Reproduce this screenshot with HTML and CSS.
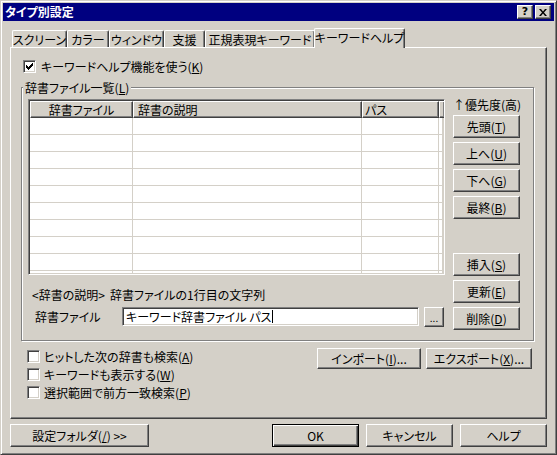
FILE: index.html
```html
<!DOCTYPE html>
<html lang="ja">
<head>
<meta charset="utf-8">
<title>タイプ別設定</title>
<link rel="stylesheet" href="styles.css">
</head>
<body>
<div class="window">
  <div class="titlebar">
    <span class="title">タイプ別設定</span>
    <div class="capbtns">
      <span class="capbtn q">?</span>
      <span class="capbtn"><svg class="xicon" width="8" height="7" viewBox="0 0 8 7"><path d="M0 0h2l2 2.5L6 0h2L5 3.5 8 7H6L4 4.5 2 7H0l3-3.5z" fill="#000"/></svg></span>
    </div>
  </div>
  <div class="client">
    <div class="tabs">
      <div class="tab t1">スクリーン</div>
      <div class="tab t2">カラー</div>
      <div class="tab t3">ウィンドウ</div>
      <div class="tab t4">支援</div>
      <div class="tab t5">正規表現キーワード</div>
      <div class="tab t6 sel">キーワードヘルプ</div>
    </div>
    <div class="panel">
      <div class="chkrow top">
        <span class="chk"><svg width="9" height="9" viewBox="0 0 9 9" shape-rendering="crispEdges"><path d="M1 3V6H2V7H3V8H4V7H5V6H6V5H7V4H8V1H7V2H6V3H5V4H4V5H3V4H2V3Z" fill="#000"/></svg></span>
        <span>キーワードヘルプ機能を使う(<u>K</u>)</span>
      </div>
      <fieldset class="group">
        <legend>辞書ファイル一覧(<u>L</u>)</legend>
        <div class="group-body">
          <div class="leftcol">
            <div class="listview">
              <div class="lv-header">
                <div class="hcell center">辞書ファイル</div>
                <div class="hcell">辞書の説明</div>
                <div class="hcell narrow">パス</div>
                <div class="hcell"></div>
              </div>
              <div class="lv-row"><span></span><span></span><span></span><span></span></div>
              <div class="lv-row"><span></span><span></span><span></span><span></span></div>
              <div class="lv-row"><span></span><span></span><span></span><span></span></div>
              <div class="lv-row"><span></span><span></span><span></span><span></span></div>
              <div class="lv-row"><span></span><span></span><span></span><span></span></div>
              <div class="lv-row"><span></span><span></span><span></span><span></span></div>
              <div class="lv-row"><span></span><span></span><span></span><span></span></div>
              <div class="lv-row"><span></span><span></span><span></span><span></span></div>
              <div class="lv-row"><span></span><span></span><span></span><span></span></div>
              <div class="lv-row"><span></span><span></span><span></span><span></span></div>
            </div>
            <div class="descrow">
              <span class="dlabel">&lt;辞書の説明&gt;</span>
              <span>辞書ファイルの1行目の文字列</span>
            </div>
            <div class="filerow">
              <span class="flabel">辞書ファイル</span>
              <div class="input">キーワード辞書ファイル パス<span class="caret"></span></div>
              <div class="btn dots">...</div>
            </div>
          </div>
          <div class="rightcol">
            <div class="prio">↑優先度(高)</div>
            <div class="btn">先頭(<u>T</u>)</div>
            <div class="btn">上へ(<u>U</u>)</div>
            <div class="btn">下へ(<u>G</u>)</div>
            <div class="btn">最終(<u>B</u>)</div>
            <div class="btn far">挿入(<u>S</u>)</div>
            <div class="btn">更新(<u>E</u>)</div>
            <div class="btn">削除(<u>D</u>)</div>
          </div>
        </div>
      </fieldset>
      <div class="bottom">
        <div class="opts">
          <div class="chkrow"><span class="chk"></span><span>ヒットした次の辞書も検索(<u>A</u>)</span></div>
          <div class="chkrow"><span class="chk"></span><span>キーワードも表示する(<u>W</u>)</span></div>
          <div class="chkrow"><span class="chk"></span><span>選択範囲で前方一致検索(<u>P</u>)</span></div>
        </div>
        <div class="ie">
          <div class="btn imp">インポート(<u>I</u>)...</div>
          <div class="btn exp">エクスポート(<u>X</u>)...</div>
        </div>
      </div>
    </div>
    <div class="footer">
      <div class="btn setf">設定フォルダ(<u>/</u>) &gt;&gt;</div>
      <div class="btn ok">OK</div>
      <div class="btn cancel">キャンセル</div>
      <div class="btn help">ヘルプ</div>
    </div>
  </div>
</div>
</body>
</html>
```

FILE: styles.css
```css
* { box-sizing: border-box; }
html, body { margin: 0; padding: 0; }
body {
  width: 557px;
  height: 455px;
  overflow: hidden;
  background: #d4d0c8;
  color: #000;
  font-family: "Noto Sans CJK JP", "Noto Sans", sans-serif;
  font-size: 12px;
  line-height: 13px;
  font-feature-settings: "palt" 1;
}
u { text-decoration: underline; text-underline-offset: 1px; }

.window {
  width: 557px;
  height: 455px;
  border: 1px solid;
  border-color: #d4d0c8 #404040 #404040 #d4d0c8;
  box-shadow: inset 1px 1px #fff, inset -1px -1px #808080;
  padding: 2px;
  background: #d4d0c8;
  display: flex;
  flex-direction: column;
}

.titlebar {
  height: 18px;
  background: #000080;
  display: flex;
  align-items: center;
  padding: 0 3px 0 2px;
}
.title {
  flex: 1;
  color: #fff;
  font-weight: bold;
  line-height: 14px;
}
.capbtns { display: flex; gap: 2px; }
.capbtn {
  width: 16px;
  height: 14px;
  background: #d4d0c8;
  border: 1px solid;
  border-color: #fff #404040 #404040 #fff;
  box-shadow: inset -1px -1px #808080;
  display: flex;
  align-items: center;
  justify-content: center;
}
.capbtn.q {
  font-family: "DejaVu Sans", sans-serif;
  font-weight: bold;
  font-size: 11px;
  line-height: 12px;
}
.xicon { display: block; }

.client { padding: 0 7px; }

.tabs {
  display: flex;
  align-items: flex-end;
  height: 19px;
  margin-top: 7px;
  padding-left: 2px;
}
.tab {
  height: 17px;
  border-top: 1px solid #fff;
  border-left: 1px solid #fff;
  border-right: 1px solid #404040;
  box-shadow: inset -1px 0 #808080;
  border-radius: 2px 2px 0 0;
  display: flex;
  align-items: center;
  justify-content: center;
  white-space: nowrap;
}
.t1 { width: 55px; }
.t2 { width: 42px; }
.t3 { width: 55px; }
.t4 { width: 41px; }
.t5 { width: 110px; }
.t6 { width: 91px; }
.tab.sel {
  height: 20px;
  margin: 0 -2px -1px -1px;
  padding-bottom: 2px;
  position: relative;
  z-index: 1;
  background: #d4d0c8;
}

.panel {
  height: 372px;
  border: 1px solid;
  border-color: #fff #404040 #404040 #fff;
  box-shadow: inset -1px -1px #808080;
}

.chkrow {
  display: flex;
  align-items: center;
  gap: 5px;
  height: 13px;
  white-space: nowrap;
}
.chkrow.top { margin: 12px 0 0 12px; }
.chk {
  flex: none;
  width: 13px;
  height: 13px;
  padding: 1px;
  background: #fff;
  border: 1px solid;
  border-color: #808080 #fff #fff #808080;
  box-shadow: inset 1px 1px #404040, inset -1px -1px #d4d0c8;
}
.chk svg { display: block; }

.group {
  margin: 8px 12px 0 10px;
  padding: 5px 13px 10px 0;
  border: 1px solid #808080;
  box-shadow: inset 1px 1px #fff, 1px 1px #fff;
  min-width: 0;
}
.group legend {
  margin-left: 1px;
  padding: 0 2px;
  line-height: 13px;
  background: #d4d0c8;
}
.group-body {
  display: flex;
  gap: 8px;
  margin-left: 6px;
}
.leftcol { width: 417px; }

.listview {
  width: 417px;
  height: 176px;
  background: #fff;
  border: 1px solid;
  border-color: #808080 #fff #fff #808080;
  box-shadow: inset 1px 1px #404040, inset -1px -1px #d4d0c8;
  padding: 1px;
  overflow: hidden;
}
.lv-header, .lv-row {
  display: grid;
  grid-template-columns: 103px 229px 77px 4px;
}
.hcell {
  height: 17px;
  background: #d4d0c8;
  border: 1px solid;
  border-color: #fff #404040 #404040 #fff;
  box-shadow: inset -1px -1px #808080;
  line-height: 15px;
  padding-left: 4px;
  white-space: nowrap;
  overflow: hidden;
}
.hcell.center { text-align: center; padding-left: 0; }
.hcell.narrow { padding-left: 2px; }
.lv-row span {
  display: block;
  height: 17px;
  border-right: 1px solid #d4d0c8;
  border-bottom: 1px solid #d4d0c8;
}

.descrow {
  display: flex;
  margin-top: 13px;
  height: 13px;
  white-space: nowrap;
}
.dlabel { width: 82px; padding-left: 4px; }

.filerow {
  display: flex;
  align-items: flex-start;
  margin-top: 6px;
  height: 20px;
}
.flabel {
  width: 94px;
  padding-left: 7px;
  line-height: 19px;
  white-space: nowrap;
}
.input {
  width: 297px;
  height: 19px;
  background: #fff;
  border: 1px solid;
  border-color: #808080 #fff #fff #808080;
  box-shadow: inset 1px 1px #404040, inset -1px -1px #d4d0c8;
  padding-left: 3px;
  display: flex;
  align-items: center;
  white-space: nowrap;
}
.caret {
  width: 1px;
  height: 13px;
  background: #000;
  margin-left: 1px;
}

.btn {
  height: 23px;
  background: #d4d0c8;
  border: 1px solid;
  border-color: #fff #404040 #404040 #fff;
  box-shadow: inset -1px -1px #808080;
  display: flex;
  align-items: center;
  justify-content: center;
  white-space: nowrap;
}
.dots {
  width: 20px;
  height: 20px;
  margin-left: 5px;
  align-items: flex-end;
  padding-bottom: 3px;
  font-size: 10px;
  line-height: 10px;
}

.rightcol {
  width: 67px;
  display: flex;
  flex-direction: column;
  gap: 4px;
}
.prio { line-height: 12px; white-space: nowrap; }
.btn.far { margin-top: 30px; }

.bottom {
  display: flex;
  justify-content: space-between;
  align-items: flex-start;
}
.opts {
  margin: 9px 0 0 16px;
  display: flex;
  flex-direction: column;
  gap: 5px;
}
.opts .chkrow { gap: 4px; }
.ie {
  margin: 7px 14px 0 0;
  display: flex;
  gap: 5px;
}
.ie .btn { height: 21px; }
.imp { width: 104px; }
.exp { width: 106px; }

.footer {
  display: flex;
  margin-top: 5px;
}
.setf { width: 139px; }
.ok {
  width: 87px;
  margin-left: auto;
  border: 1px solid #000;
  box-shadow: inset 1px 1px #fff, inset -1px -1px #404040, inset -2px -2px #808080;
}
.cancel, .help { width: 87px; margin-left: 7px; }
```
